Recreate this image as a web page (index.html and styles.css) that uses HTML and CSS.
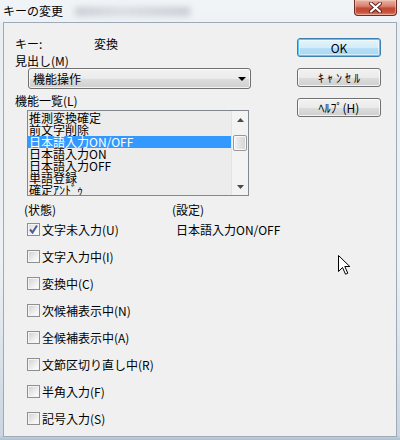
FILE: index.html
```html
<!DOCTYPE html>
<html lang="ja">
<head>
<meta charset="utf-8">
<title>キーの変更</title>
<link rel="stylesheet" href="styles.css">
</head>
<body>
<div class="window">
  <div class="titlebar">
    <span class="title">キーの変更</span>
    <span class="blur"></span>
    <span class="close">
      <svg width="13" height="11" viewBox="0 0 13 11"><path d="M2 1.5 L11 9.5 M11 1.5 L2 9.5" stroke="#5a2018" stroke-width="4" stroke-linecap="round"/><path d="M2 1.5 L11 9.5 M11 1.5 L2 9.5" stroke="#ffffff" stroke-width="2.2" stroke-linecap="round"/></svg>
    </span>
  </div>
  <div class="client">
    <div class="main">
      <div class="keyrow"><span class="keylabel">キー:</span><span>変換</span></div>
      <div class="label">見出し(M)</div>
      <div class="combo">
        <span class="combo-text">機能操作</span>
        <svg class="combo-arrow" width="8" height="4" viewBox="0 0 8 4"><path d="M0 0 H8 L4 4 Z" fill="#000"/></svg>
      </div>
      <div class="label label-list">機能一覧(L)</div>
      <div class="listbox">
        <div class="items">
          <div class="item">推測変換確定</div>
          <div class="item">前文字削除</div>
          <div class="item selected">日本語入力ON/OFF</div>
          <div class="item">日本語入力ON</div>
          <div class="item">日本語入力OFF</div>
          <div class="item">単語登録</div>
          <div class="item">確定ｱﾝﾄﾞｩ</div>
        </div>
        <div class="scrollbar">
          <div class="sb-btn"><svg width="7" height="4" viewBox="0 0 7 4"><path d="M3.5 0 L7 4 H0 Z" fill="#4a4a4a"/></svg></div>
          <div class="sb-thumb"></div>
          <div class="sb-space"></div>
          <div class="sb-btn"><svg width="7" height="4" viewBox="0 0 7 4"><path d="M0 0 H7 L3.5 4 Z" fill="#4a4a4a"/></svg></div>
        </div>
      </div>
      <div class="status-head"><span class="head-state">(状態)</span><span>(設定)</span></div>
      <div class="status-grid">
        <label class="check"><span class="box checked"><svg width="11" height="11" viewBox="0 0 11 11"><path d="M2 5.5 L4.5 8.5 L9 1.5" fill="none" stroke="#4b5f94" stroke-width="2"/></svg></span>文字未入力(U)</label>
        <span class="setting">日本語入力ON/OFF</span>
        <label class="check"><span class="box"></span>文字入力中(I)</label>
        <span></span>
        <label class="check"><span class="box"></span>変換中(C)</label>
        <span></span>
        <label class="check"><span class="box"></span>次候補表示中(N)</label>
        <span></span>
        <label class="check"><span class="box"></span>全候補表示中(A)</label>
        <span></span>
        <label class="check"><span class="box"></span>文節区切り直し中(R)</label>
        <span></span>
        <label class="check"><span class="box"></span>半角入力(F)</label>
        <span></span>
        <label class="check"><span class="box"></span>記号入力(S)</label>
        <span></span>
      </div>
    </div>
    <div class="buttons">
      <div class="btn btn-default">OK</div>
      <div class="btn btn-wide">ｷｬﾝｾﾙ</div>
      <div class="btn">ﾍﾙﾌﾟ(H)</div>
    </div>
  </div>
  <svg class="cursor" width="13" height="20" viewBox="0 0 13 20"><path d="M0.5 0.5 L0.5 16.5 L4.5 12.5 L7.5 19.2 L9.8 18.2 L6.8 11.5 L11.8 11.5 Z" fill="#fff" stroke="#000" stroke-width="1" stroke-linejoin="miter"/></svg>
</div>
</body>
</html>
```

FILE: styles.css
```css
* { box-sizing: border-box; }
html, body {
  margin: 0;
  padding: 0;
}
body {
  width: 400px;
  height: 440px;
  overflow: hidden;
  font-family: "Noto Sans CJK JP", "Noto Sans", sans-serif;
  font-size: 12px;
  color: #000;
}
.window {
  position: relative;
  width: 400px;
  height: 440px;
  background: linear-gradient(#e9eef3, #edf1f5 60%, #c9d5e1 99%, #aebfd1);
  display: flex;
  flex-direction: column;
}
.titlebar {
  height: 22px;
  display: flex;
  align-items: flex-start;
  background: linear-gradient(#f1f4f7, #eef2f6);
}
.title {
  margin-left: 3px;
  margin-top: 4px;
  line-height: 14px;
  font-size: 12px;
  color: #000;
}
.blur {
  width: 115px;
  height: 9px;
  margin-left: 12px;
  margin-top: 7px;
  background: linear-gradient(90deg, rgba(110,120,135,0.3), rgba(130,140,150,0.2) 40%, rgba(110,120,135,0.3));
  filter: blur(3px);
}
.close {
  margin-left: auto;
  margin-right: 3px;
  width: 43px;
  height: 16px;
  border: 1px solid #6e2c22;
  border-top: none;
  border-radius: 0 0 4px 4px;
  background: linear-gradient(#eab3a4, #d98572 40%, #c44a35 55%, #c5503a 80%, #dc8a6e);
  box-shadow: inset 0 0 0 1px rgba(255,220,210,0.45);
  display: flex;
  align-items: center;
  justify-content: center;
}
.client {
  margin-left: 3px;
  width: 394px;
  height: 415px;
  background: #f0f0f0;
  border: 1px solid #9eaab6;
  display: flex;
}
.main {
  flex: 1;
  padding-left: 11px;
  padding-top: 14px;
  display: flex;
  flex-direction: column;
  align-items: flex-start;
}
.keyrow {
  display: flex;
  line-height: 14px;
  height: 14px;
}
.keylabel {
  width: 79px;
}
.label {
  margin-top: 3px;
  line-height: 14px;
  height: 14px;
}
.label-list {
  margin-top: 5px;
}
.combo {
  margin-left: 13px;
  width: 223px;
  height: 21px;
  border: 1px solid #707070;
  border-radius: 3px;
  background: linear-gradient(#f2f2f2, #ebebeb 50%, #dddddd 51%, #cfcfcf);
  box-shadow: inset 0 0 0 1px rgba(255,255,255,0.7);
  display: flex;
  align-items: center;
  padding-left: 4px;
  padding-right: 4px;
}
.combo-text {
  line-height: 19px;
  flex: 1;
}
.combo-arrow {
  display: block;
}
.listbox {
  margin-top: 2px;
  margin-left: 12px;
  width: 222px;
  height: 86px;
  border: 1px solid #828790;
  background: #ececec;
  display: flex;
}
.items {
  flex: 1;
  padding-top: 1px;
  overflow: hidden;
}
.item {
  height: 12px;
  line-height: 12px;
  font-size: 12px;
  padding-left: 1px;
  white-space: nowrap;
}
.item.selected {
  background: #3399ff;
  color: #fff;
}
.scrollbar {
  width: 17px;
  border-left: 1px solid #e2e2e2;
  background: #f3f3f3;
  display: flex;
  flex-direction: column;
  align-items: center;
}
.sb-btn {
  height: 17px;
  width: 100%;
  display: flex;
  align-items: center;
  justify-content: center;
}
.sb-btn svg { display: block; }
.sb-thumb {
  margin-top: 7px;
  width: 14px;
  height: 16px;
  border: 1px solid #979797;
  border-radius: 2px;
  background: linear-gradient(90deg, #f3f3f3, #e2e2e2 50%, #d4d4d4);
  box-shadow: inset 0 0 0 1px rgba(255,255,255,0.8);
}
.sb-space { flex: 1; }
.status-head {
  margin-top: 7px;
  margin-left: 9px;
  display: flex;
  line-height: 13px;
  height: 13px;
}
.head-state {
  width: 148px;
}
.status-grid {
  margin-left: 12px;
  display: grid;
  grid-template-columns: 149px auto;
  grid-auto-rows: 27px;
  align-items: center;
}
.check {
  display: flex;
  align-items: center;
  gap: 2px;
  line-height: 14px;
  white-space: nowrap;
}
.box {
  width: 13px;
  height: 13px;
  border: 1px solid #8e8f8f;
  background: linear-gradient(135deg, #cfcfcf, #f4f4f4 70%, #ffffff);
  box-shadow: inset 0 0 0 1px #f4f4f4;
  display: flex;
  align-items: center;
  justify-content: center;
}
.box.checked {
  background: linear-gradient(135deg, #dcdcdc, #f6f6f6 70%, #ffffff);
}
.box svg { display: block; }
.setting {
  line-height: 14px;
  white-space: nowrap;
}
.buttons {
  width: 84px;
  margin-right: 15px;
  padding-top: 15px;
  display: flex;
  flex-direction: column;
  gap: 11px;
}
.btn {
  height: 19px;
  border: 1px solid #707070;
  border-radius: 3px;
  background: linear-gradient(#f2f2f2, #ebebeb 50%, #dddddd 51%, #cfcfcf);
  box-shadow: inset 0 0 0 1px rgba(255,255,255,0.75);
  text-align: center;
  line-height: 17px;
  font-size: 12px;
}
.btn-wide {
  letter-spacing: 3px;
  text-indent: 3px;
}
.btn-default {
  border-color: #3c7fb1;
  background: linear-gradient(#e5f4fc, #d5ecf9 50%, #b8dff6 51%, #a7d8f3);
  box-shadow: inset 0 0 0 1px #5ec6f2, inset 0 0 0 2px rgba(255,255,255,0.5);
}
.cursor {
  position: absolute;
  left: 338px;
  top: 255px;
}
```
